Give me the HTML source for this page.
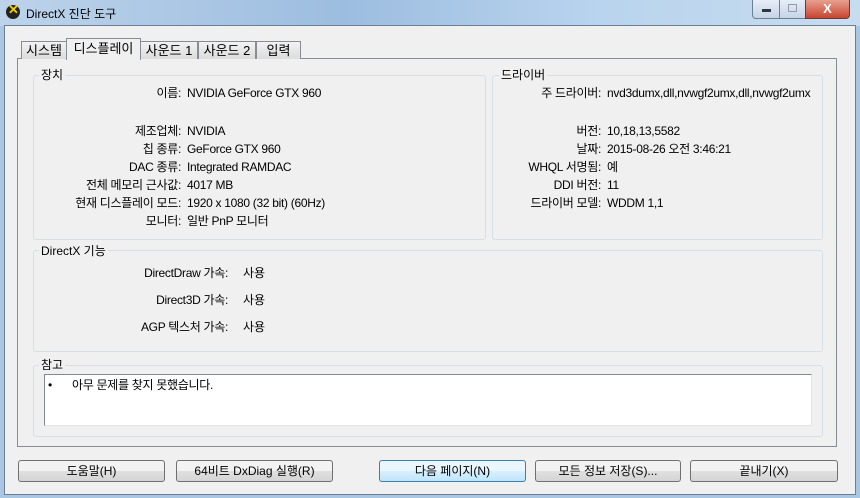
<!DOCTYPE html>
<html><head><meta charset="utf-8"><style>
body{margin:0;width:860px;height:498px;overflow:hidden;background:#a9c6e3;font-family:"Liberation Sans","Noto Sans CJK KR",sans-serif;font-size:12px;color:#000;position:relative}
.a{position:absolute}
.title{left:0;top:0;width:860px;height:26px;background:linear-gradient(90deg,#bcd3ea,#9dbde0 40%,#b9d4ee 70%,#c7dcef)}
.frame{left:4px;top:25px;width:850px;height:468px;background:#f0f0f0;border:1px solid #6c7f95}
.panel{left:17px;top:58px;width:818px;height:387px;border:1px solid #898c95;background:#f0f0f0}
.tab{top:41px;height:17px;border:1px solid #898c95;border-bottom:none;background:linear-gradient(#f2f2f2,#dcdcdc);text-align:center;line-height:17px;font-size:13px}
.grp{border:1px solid #d5dfe5;border-radius:3px}
.lg{background:#f0f0f0;padding:0 2px;font-size:12px}
.r{text-align:right}
.t{letter-spacing:-0.3px}
.btn{top:460px;height:20px;border:1px solid #707070;border-radius:3px;background:linear-gradient(#f2f2f2 50%,#e0e0e0 50%,#d4d4d4);text-align:center;line-height:20px;font-size:12px}
</style></head><body>
<div class="a title"></div>
<div class="a" style="left:6px;top:5px;width:14px;height:14px;border-radius:50%;background:#222"></div>
<div class="a" style="left:8px;top:2px;color:#f0d000;font-weight:bold;font-size:13px">✕</div>
<div class="a" style="left:26px;top:5px;font-size:12px">DirectX 진단 도구</div>
<div class="a" style="left:752px;top:0;width:27px;height:18px;border:1px solid #6e7f93;border-top:none;border-radius:0 0 0 4px;background:linear-gradient(#e6eef7,#c5d4e6)"></div>
<div class="a" style="left:762px;top:9px;width:9px;height:3px;background:#334;"></div>
<div class="a" style="left:779px;top:0;width:26px;height:18px;border:1px solid #6e7f93;border-top:none;background:linear-gradient(#e6eef7,#c5d4e6)"></div>
<div class="a" style="left:788px;top:4px;width:7px;height:6px;border:1px solid #99a"></div>
<div class="a" style="left:805px;top:0;width:43px;height:18px;border:1px solid #6e3a36;border-top:none;border-radius:0 0 4px 0;background:linear-gradient(#e8a08f,#c7442f);color:#fff;text-align:center;font-weight:bold;line-height:17px;font-size:13px">X</div>
<div class="a frame"></div>
<div class="a panel"></div>
<div class="a tab" style="left:21px;width:44px">시스템</div>
<div class="a tab" style="left:66px;top:38px;height:21px;width:73px;background:#f0f0f0;line-height:19px">디스플레이</div>
<div class="a tab" style="left:140px;width:56px">사운드 1</div>
<div class="a tab" style="left:198px;width:56px">사운드 2</div>
<div class="a tab" style="left:256px;width:43px">입력</div>

<div class="a grp" style="left:33px;top:75px;width:451px;height:163px"></div>
<div class="a lg" style="left:39px;top:66px">장치</div>
<div class="a grp" style="left:492px;top:75px;width:329px;height:163px"></div>
<div class="a lg" style="left:499px;top:66px">드라이버</div>
<div class="a grp" style="left:33px;top:250px;width:788px;height:100px"></div>
<div class="a lg" style="left:39px;top:242px">DirectX 기능</div>
<div class="a grp" style="left:33px;top:365px;width:788px;height:70px"></div>
<div class="a lg" style="left:39px;top:356px">참고</div>
<div class="a" style="left:44px;top:374px;width:766px;height:50px;background:#fff;border:1px solid #828790;border-right-color:#e3e3e3;border-bottom-color:#e3e3e3"></div>
<div class="a" style="left:48px;top:378px">•</div>
<div class="a t" style="left:72px;top:376px">아무 문제를 찾지 못했습니다.</div>

<div class="a r t" style="left:40px;width:141px;top:84px;line-height:18px">이름:<br><br><span style="display:block;margin-top:2px">제조업체:<br>칩 종류:<br>DAC 종류:<br>전체 메모리 근사값:<br>현재 디스플레이 모드:<br>모니터:</span></div>
<div class="a t" style="left:187px;top:84px;line-height:18px">NVIDIA GeForce GTX 960<br><br><span style="display:block;margin-top:2px">NVIDIA<br>GeForce GTX 960<br>Integrated RAMDAC<br>4017 MB<br>1920 x 1080 (32 bit) (60Hz)<br>일반 PnP 모니터</span></div>
<div class="a r t" style="left:500px;width:101px;top:84px;line-height:18px">주 드라이버:<br><br><span style="display:block;margin-top:2px">버전:<br>날짜:<br>WHQL 서명됨:<br>DDI 버전:<br>드라이버 모델:</span></div>
<div class="a t" style="left:607px;top:84px;width:208px;overflow:hidden;white-space:nowrap;line-height:18px">nvd3dumx,dll,nvwgf2umx,dll,nvwgf2umx<br><br><span style="display:block;margin-top:2px">10,18,13,5582<br>2015-08-26 오전 3:46:21<br>예<br>11<br>WDDM 1,1</span></div>
<div class="a r t" style="left:60px;width:168px;top:260px;line-height:27px">DirectDraw 가속:<br>Direct3D 가속:<br>AGP 텍스처 가속:</div>
<div class="a" style="left:243px;top:260px;line-height:27px">사용<br>사용<br>사용</div>

<div class="a btn" style="left:18px;width:145px">도움말(H)</div>
<div class="a btn" style="left:176px;width:155px">64비트 DxDiag 실행(R)</div>
<div class="a btn" style="left:379px;width:145px;border-color:#3c7fb1;background:linear-gradient(#eaf6fd 50%,#d9f0fc 50%,#bee6fd)">다음 페이지(N)</div>
<div class="a btn" style="left:535px;width:144px">모든 정보 저장(S)...</div>
<div class="a btn" style="left:690px;width:146px">끝내기(X)</div>
</body></html>
